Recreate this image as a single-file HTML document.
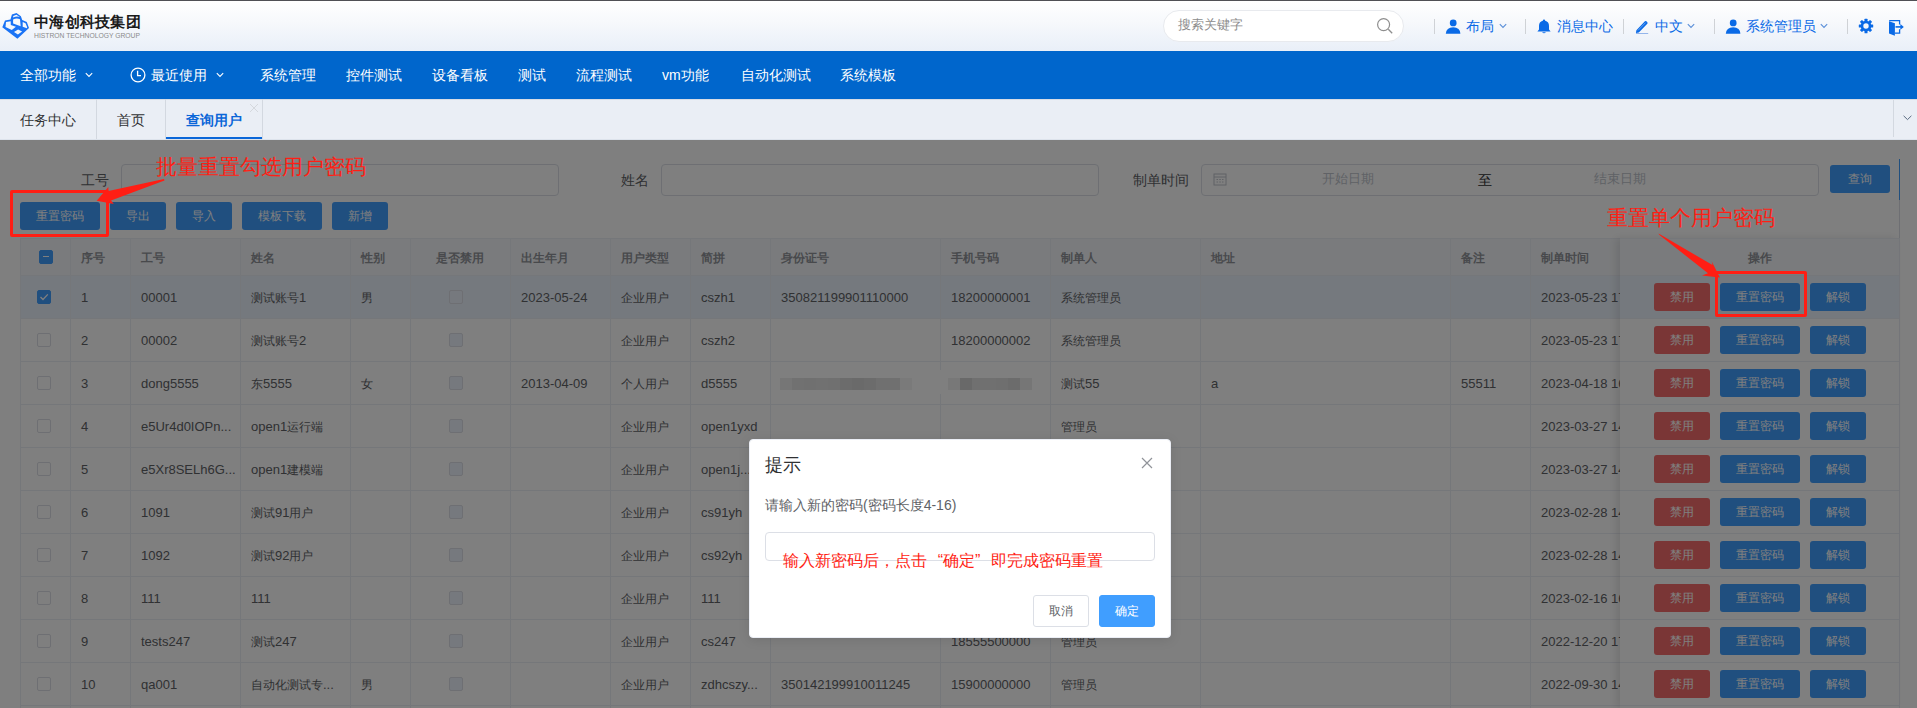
<!DOCTYPE html><html><head><meta charset="utf-8"><style>
*{box-sizing:border-box;}
html,body{margin:0;padding:0;}
body{width:1917px;height:708px;overflow:hidden;position:relative;font-family:"Liberation Sans",sans-serif;background:#fff;}
.a{position:absolute;white-space:nowrap;}
#hdr{left:0;top:0;width:1917px;height:51px;background:linear-gradient(#ffffff 0%,#f7f9fc 40%,#e9eff8 100%);border-top:1px solid #505055;}
#nav{left:0;top:51px;width:1917px;height:48px;background:#0066cc;color:#fff;font-size:14px;}
#nav .a{top:0;line-height:48px;}
#tabs{left:0;top:99px;width:1917px;height:41px;background:#eaeef5;font-size:14px;color:#303133;border-bottom:1px solid #dde3ec;}
.hi{color:#0a6ae6;font-size:14px;line-height:16px;}
.sep{width:1px;background:#cfd2d6;}
#content{left:0;top:140px;width:1917px;height:568px;background:#fff;}
.lbl{font-size:14px;color:#606266;line-height:16px;}
.inp{border:1px solid #dcdfe6;border-radius:4px;background:#fff;}
.btn{background:#409eff;color:#fff;font-size:12px;border-radius:3px;text-align:center;line-height:28px;height:28px;}
.btn.r{background:#f56c6c;}
.cj{font-size:12px;}
.th{font-size:12px;font-weight:bold;color:#909399;line-height:16px;}
.td{font-size:13px;color:#606266;line-height:16px;}
.vl{width:1px;background:#ebeef5;}
.hl{height:1px;background:#ebeef5;}
.cb{width:14px;height:14px;border:1px solid #dcdfe6;border-radius:2px;background:#fff;}
.cb.on{background:#409eff;border-color:#409eff;}
.cb.dis{background:#edf2fc;border-color:#dcdfe6;}
#ov{left:0;top:140px;width:1917px;height:568px;background:rgba(0,0,0,0.5);}
.red{color:#ff1e14;}
</style></head><body>
<div id="hdr" class="a">
<svg class="a" style="left:0;top:9px" width="32" height="32" viewBox="0 10 32 32">
<path fill="#1a73f5" fill-rule="evenodd" d="M2.3 27.2 L5.0 20.6 L10.5 19.4 L11.9 14.4 L16.5 13.1 L20.9 16.2 L22.2 20.1 L26.8 22.1 L29.0 27.9 L17.4 38.8 Z
M13.2 16.0 L16.4 14.8 L19.8 17.0 Q16.5 16.0 13.2 17.6 Z
M13.1 19.5 Q16.6 17.7 20.0 19.3 L20.5 24.5 L20.7 26.2 L13.1 23.5 Z
M6.0 22.0 L10.7 21.2 L10.8 24.9 L15.9 26.8 L11.8 29.9 L5.5 27.0 Z
M14.0 32.1 L18.1 29.5 L22.1 31.5 L17.9 34.6 Z
M22.7 21.9 L25.5 23.2 L27.2 27.3 L26.8 28.2 L22.7 26.8 Z"/>
</svg>
<div class="a" style="left:34px;top:12px;font-size:15px;font-weight:bold;color:#1b1b1b;line-height:18px;letter-spacing:0.3px">中海创科技集团</div>
<div class="a" style="left:34px;top:31px;font-size:7px;color:#8a8a8a;line-height:8px;transform-origin:0 0;transform:scaleX(0.965)">HISTRON TECHNOLOGY GROUP</div>
<div class="a" style="left:1163px;top:9px;width:241px;height:32px;border:1px solid #e8eaee;border-radius:16px;background:#fff"></div>
<div class="a" style="left:1178px;top:16px;font-size:13px;color:#8c8c8c;line-height:16px">搜索关键字</div>
<svg class="a" style="left:1376px;top:16px" width="18" height="18" viewBox="0 0 18 18"><circle cx="7.6" cy="7.6" r="6" fill="none" stroke="#8e8e8e" stroke-width="1.2"/><path d="M12.3 12.3 L16.2 16.2" stroke="#8e8e8e" stroke-width="1.3"/></svg>
<div class="a sep" style="left:1434px;top:18px;height:15px"></div>
<div class="a sep" style="left:1525px;top:18px;height:15px"></div>
<div class="a sep" style="left:1623px;top:18px;height:15px"></div>
<div class="a sep" style="left:1714px;top:18px;height:15px"></div>
<div class="a sep" style="left:1847px;top:18px;height:15px"></div>
<svg class="a" style="left:1445px;top:17px" width="16" height="17" viewBox="0 0 16 17"><circle cx="8.2" cy="4.9" r="3.4" fill="#0a6ae6"/><path d="M0.8 15.8 Q1.2 9.2 8.2 9.2 Q15.2 9.2 15.4 15.8 Z" fill="#0a6ae6"/></svg>
<div class="a hi" style="left:1466px;top:17px">布局</div>
<svg class="a" style="left:1499px;top:22px" width="8" height="6" viewBox="0 0 8 6"><path d="M0.8 1.2 L4 4.4 L7.2 1.2" fill="none" stroke="#5a8fd8" stroke-width="1.1"/></svg>
<svg class="a" style="left:1537px;top:18px" width="14" height="15" viewBox="0 0 14 15"><path d="M7 0.6 Q8.2 0.6 8.2 1.8 Q12 2.8 12 7 L12 10.6 L13.6 12.4 L0.4 12.4 L2 10.6 L2 7 Q2 2.8 5.8 1.8 Q5.8 0.6 7 0.6Z" fill="#0a6ae6"/><path d="M5 13.2 Q7 15.4 9 13.2Z" fill="#0a6ae6"/></svg>
<div class="a hi" style="left:1557px;top:17px">消息中心</div>
<svg class="a" style="left:1635px;top:18px" width="14" height="15" viewBox="0 0 14 15"><path d="M1.4 11.2 L9.9 2.3 Q10.6 1.6 11.4 2.3 L12.3 3.2 Q13 4 12.3 4.7 L3.8 13.4 L0.9 14 Z" fill="#0a6ae6"/><path d="M3 11.4 L10.6 3.6" stroke="#7fb0f0" stroke-width="0.8"/><path d="M1 14.6 L13.2 14.6" stroke="#7ea6e6" stroke-width="0.9"/></svg>
<div class="a hi" style="left:1655px;top:17px">中文</div>
<svg class="a" style="left:1687px;top:22px" width="8" height="6" viewBox="0 0 8 6"><path d="M0.8 1.2 L4 4.4 L7.2 1.2" fill="none" stroke="#5a8fd8" stroke-width="1.1"/></svg>
<svg class="a" style="left:1725px;top:17px" width="16" height="17" viewBox="0 0 16 17"><circle cx="8.2" cy="4.9" r="3.4" fill="#0a6ae6"/><path d="M0.8 15.8 Q1.2 9.2 8.2 9.2 Q15.2 9.2 15.4 15.8 Z" fill="#0a6ae6"/></svg>
<div class="a hi" style="left:1746px;top:17px">系统管理员</div>
<svg class="a" style="left:1820px;top:22px" width="8" height="6" viewBox="0 0 8 6"><path d="M0.8 1.2 L4 4.4 L7.2 1.2" fill="none" stroke="#5a8fd8" stroke-width="1.1"/></svg>
<svg class="a" style="left:1858px;top:17px" width="16" height="16" viewBox="0 0 16 16"><g fill="#0a6ae6">
<rect x="6.5" y="0.8" width="3" height="3.4" rx="0.5"/><rect x="6.5" y="11.8" width="3" height="3.4" rx="0.5"/><rect x="0.8" y="6.5" width="3.4" height="3" rx="0.5"/><rect x="11.8" y="6.5" width="3.4" height="3" rx="0.5"/>
<g transform="rotate(45 8 8)"><rect x="6.5" y="0.8" width="3" height="3.4" rx="0.5"/><rect x="6.5" y="11.8" width="3" height="3.4" rx="0.5"/><rect x="0.8" y="6.5" width="3.4" height="3" rx="0.5"/><rect x="11.8" y="6.5" width="3.4" height="3" rx="0.5"/></g></g>
<circle cx="8" cy="8" r="4" fill="none" stroke="#0a6ae6" stroke-width="2.6"/></svg>
<svg class="a" style="left:1888px;top:17px" width="17" height="19" viewBox="0 0 17 19"><path d="M1 3.2 L6.9 5.3 L6.9 17.8 L1 15.4 Z" fill="#0a6ae6"/><path d="M1.2 2.7 L11.6 2.7 L11.6 6.6 M11.6 11.2 L11.6 15.2 L6.9 15.2" fill="none" stroke="#0a6ae6" stroke-width="1.3"/><path d="M7.5 8.9 L14.6 8.9" stroke="#0a6ae6" stroke-width="1.6"/><path d="M12.4 6.1 L15.8 8.9 L12.4 11.7 Z" fill="#0a6ae6"/></svg>
</div>
<div id="nav" class="a">
<div class="a" style="left:20px">全部功能</div>
<svg class="a" style="left:85px;top:21px" width="8" height="6" viewBox="0 0 8 6"><path d="M0.8 1.2 L4 4.4 L7.2 1.2" fill="none" stroke="#fff" stroke-width="1.1"/></svg>
<svg class="a" style="left:130px;top:16px" width="16" height="16" viewBox="0 0 16 16"><circle cx="8" cy="8" r="6.9" fill="none" stroke="#fff" stroke-width="1.3"/><path d="M7.6 3.8 L7.6 8.6 L11 8.6" fill="none" stroke="#fff" stroke-width="1.3"/></svg>
<div class="a" style="left:151px">最近使用</div>
<svg class="a" style="left:216px;top:21px" width="8" height="6" viewBox="0 0 8 6"><path d="M0.8 1.2 L4 4.4 L7.2 1.2" fill="none" stroke="#fff" stroke-width="1.1"/></svg>
<div class="a" style="left:260px">系统管理</div>
<div class="a" style="left:346px">控件测试</div>
<div class="a" style="left:432px">设备看板</div>
<div class="a" style="left:518px">测试</div>
<div class="a" style="left:576px">流程测试</div>
<div class="a" style="left:662px">vm功能</div>
<div class="a" style="left:741px">自动化测试</div>
<div class="a" style="left:840px">系统模板</div>
</div>
<div id="tabs" class="a">
<div class="a" style="left:0;top:0;width:1917px;height:1px;background:#d6dce6"></div>
<div class="a" style="left:20px;top:13px;line-height:16px">任务中心</div>
<div class="a sep" style="left:96px;top:0;height:40px;background:#d3d8e0"></div>
<div class="a" style="left:117px;top:13px;line-height:16px">首页</div>
<div class="a sep" style="left:165px;top:0;height:40px;background:#d3d8e0"></div>
<div class="a" style="left:186px;top:13px;line-height:16px;color:#0a66d8;font-weight:bold">查询用户</div>
<div class="a" style="left:166px;top:38px;width:96px;height:2px;background:#0a66d8"></div>
<div class="a sep" style="left:262px;top:0;height:40px;background:#d3d8e0"></div>
<svg class="a" style="left:249px;top:4px" width="10" height="10" viewBox="0 0 10 10"><path d="M1 1 L9 9 M9 1 L1 9" stroke="#d2d5da" stroke-width="0.9"/></svg>
<div class="a sep" style="left:1893px;top:1px;height:37px;background:#d3d8e0"></div>
<svg class="a" style="left:1903px;top:16px" width="9" height="6" viewBox="0 0 9 6"><path d="M0.6 0.8 L4.5 4.6 L8.4 0.8" fill="none" stroke="#5a6a80" stroke-width="1"/></svg>
</div>
<div id="content" class="a"></div>
<div class="a lbl" style="left:81px;top:172px">工号</div>
<div class="a inp" style="left:121px;top:164px;width:438px;height:32px"></div>
<div class="a lbl" style="left:621px;top:172px">姓名</div>
<div class="a inp" style="left:661px;top:164px;width:438px;height:32px"></div>
<div class="a lbl" style="left:1133px;top:172px">制单时间</div>
<div class="a inp" style="left:1201px;top:164px;width:618px;height:32px"></div>
<svg class="a" style="left:1213px;top:172px" width="14" height="14" viewBox="0 0 14 14"><rect x="1" y="2" width="12" height="11" fill="none" stroke="#c0c4cc" stroke-width="1"/><path d="M1 5 L13 5 M3.5 7.5h1.5M6.3 7.5h1.5M9 7.5h1.5M3.5 10h1.5M6.3 10h1.5M9 10h1.5" stroke="#c0c4cc" stroke-width="1"/></svg>
<div class="a" style="left:1322px;top:171px;font-size:13px;color:#c0c4cc;line-height:16px">开始日期</div>
<div class="a" style="left:1478px;top:172px;font-size:14px;color:#303133;line-height:16px">至</div>
<div class="a" style="left:1594px;top:171px;font-size:13px;color:#c0c4cc;line-height:16px">结束日期</div>
<div class="a btn" style="left:1830px;top:165px;width:60px">查询</div>
<div class="a" style="left:1899px;top:159px;width:1px;height:41px;background:#409eff"></div><div class="a" style="left:1899px;top:200px;width:1px;height:508px;background:#dcdfe6"></div>
<div class="a btn" style="left:20px;top:202px;width:80px">重置密码</div>
<div class="a btn" style="left:110px;top:202px;width:56px">导出</div>
<div class="a btn" style="left:176px;top:202px;width:56px">导入</div>
<div class="a btn" style="left:242px;top:202px;width:80px">模板下载</div>
<div class="a btn" style="left:332px;top:202px;width:56px">新增</div>
<div class="a" style="left:20px;top:238px;width:1879px;height:38px;background:#f5f7fa"></div>
<div class="a" style="left:20px;top:276px;width:1879px;height:42px;background:#ebf3fc"></div>
<div class="a hl" style="left:20px;top:238px;width:1879px"></div>
<div class="a hl" style="left:20px;top:275px;width:1879px"></div>
<div class="a hl" style="left:20px;top:318px;width:1879px"></div>
<div class="a hl" style="left:20px;top:361px;width:1879px"></div>
<div class="a hl" style="left:20px;top:404px;width:1879px"></div>
<div class="a hl" style="left:20px;top:447px;width:1879px"></div>
<div class="a hl" style="left:20px;top:490px;width:1879px"></div>
<div class="a hl" style="left:20px;top:533px;width:1879px"></div>
<div class="a hl" style="left:20px;top:576px;width:1879px"></div>
<div class="a hl" style="left:20px;top:619px;width:1879px"></div>
<div class="a hl" style="left:20px;top:662px;width:1879px"></div>
<div class="a hl" style="left:20px;top:705px;width:1879px"></div>
<div class="a vl" style="left:20px;top:238px;height:470px"></div>
<div class="a vl" style="left:70px;top:238px;height:470px"></div>
<div class="a vl" style="left:130px;top:238px;height:470px"></div>
<div class="a vl" style="left:240px;top:238px;height:470px"></div>
<div class="a vl" style="left:350px;top:238px;height:470px"></div>
<div class="a vl" style="left:410px;top:238px;height:470px"></div>
<div class="a vl" style="left:510px;top:238px;height:470px"></div>
<div class="a vl" style="left:610px;top:238px;height:470px"></div>
<div class="a vl" style="left:690px;top:238px;height:470px"></div>
<div class="a vl" style="left:770px;top:238px;height:470px"></div>
<div class="a vl" style="left:940px;top:238px;height:470px"></div>
<div class="a vl" style="left:1050px;top:238px;height:470px"></div>
<div class="a vl" style="left:1200px;top:238px;height:470px"></div>
<div class="a vl" style="left:1450px;top:238px;height:470px"></div>
<div class="a vl" style="left:1530px;top:238px;height:470px"></div>
<div class="a vl" style="left:1620px;top:238px;height:470px"></div>
<div class="a vl" style="left:1899px;top:238px;height:470px"></div>
<div class="a th" style="left:81px;top:250px">序号</div>
<div class="a th" style="left:141px;top:250px">工号</div>
<div class="a th" style="left:251px;top:250px">姓名</div>
<div class="a th" style="left:361px;top:250px">性别</div>
<div class="a th" style="left:410px;width:100px;text-align:center;top:250px">是否禁用</div>
<div class="a th" style="left:521px;top:250px">出生年月</div>
<div class="a th" style="left:621px;top:250px">用户类型</div>
<div class="a th" style="left:701px;top:250px">简拼</div>
<div class="a th" style="left:781px;top:250px">身份证号</div>
<div class="a th" style="left:951px;top:250px">手机号码</div>
<div class="a th" style="left:1061px;top:250px">制单人</div>
<div class="a th" style="left:1211px;top:250px">地址</div>
<div class="a th" style="left:1461px;top:250px">备注</div>
<div class="a th" style="left:1541px;top:250px">制单时间</div>
<div class="a cb on" style="left:39px;top:250px"></div><div class="a" style="left:43px;top:256px;width:6px;height:1px;background:#fff"></div>
<div class="a cb on" style="left:37px;top:290px"></div>
<svg class="a" style="left:37px;top:290px" width="14" height="14" viewBox="0 0 14 14"><path d="M3.5 7 L6 9.5 L10.8 4.4" fill="none" stroke="#fff" stroke-width="1.3"/></svg>
<div class="a cb dis" style="left:449px;top:290px"></div>
<div class="a td" style="left:81px;top:290px">1</div>
<div class="a td" style="left:141px;top:290px">00001</div>
<div class="a td" style="left:251px;top:290px"><span class="cj">测试账号</span>1</div>
<div class="a td" style="left:361px;top:290px"><span class="cj">男</span></div>
<div class="a td" style="left:521px;top:290px">2023-05-24</div>
<div class="a td" style="left:621px;top:290px"><span class="cj">企业用户</span></div>
<div class="a td" style="left:701px;top:290px">cszh1</div>
<div class="a td" style="left:781px;top:290px">350821199901110000</div>
<div class="a td" style="left:951px;top:290px">18200000001</div>
<div class="a td" style="left:1061px;top:290px"><span class="cj">系统管理员</span></div>
<div class="a td" style="left:1541px;top:290px">2023-05-23 17:</div>
<div class="a cb" style="left:37px;top:333px"></div>
<div class="a cb dis" style="left:449px;top:333px"></div>
<div class="a td" style="left:81px;top:333px">2</div>
<div class="a td" style="left:141px;top:333px">00002</div>
<div class="a td" style="left:251px;top:333px"><span class="cj">测试账号</span>2</div>
<div class="a td" style="left:621px;top:333px"><span class="cj">企业用户</span></div>
<div class="a td" style="left:701px;top:333px">cszh2</div>
<div class="a td" style="left:951px;top:333px">18200000002</div>
<div class="a td" style="left:1061px;top:333px"><span class="cj">系统管理员</span></div>
<div class="a td" style="left:1541px;top:333px">2023-05-23 17:</div>
<div class="a cb" style="left:37px;top:376px"></div>
<div class="a cb dis" style="left:449px;top:376px"></div>
<div class="a td" style="left:81px;top:376px">3</div>
<div class="a td" style="left:141px;top:376px">dong5555</div>
<div class="a td" style="left:251px;top:376px"><span class="cj">东</span>5555</div>
<div class="a td" style="left:361px;top:376px"><span class="cj">女</span></div>
<div class="a td" style="left:521px;top:376px">2013-04-09</div>
<div class="a td" style="left:621px;top:376px"><span class="cj">个人用户</span></div>
<div class="a td" style="left:701px;top:376px">d5555</div>
<div class="a" style="left:780px;top:378px;width:12px;height:12px;background:rgb(236,236,236)"></div>
<div class="a" style="left:792px;top:378px;width:12px;height:12px;background:rgb(226,226,226)"></div>
<div class="a" style="left:804px;top:378px;width:12px;height:12px;background:rgb(224,224,224)"></div>
<div class="a" style="left:816px;top:378px;width:12px;height:12px;background:rgb(226,226,226)"></div>
<div class="a" style="left:828px;top:378px;width:12px;height:12px;background:rgb(224,224,224)"></div>
<div class="a" style="left:840px;top:378px;width:12px;height:12px;background:rgb(216,216,216)"></div>
<div class="a" style="left:852px;top:378px;width:12px;height:12px;background:rgb(212,212,212)"></div>
<div class="a" style="left:864px;top:378px;width:12px;height:12px;background:rgb(216,216,216)"></div>
<div class="a" style="left:876px;top:378px;width:12px;height:12px;background:rgb(224,224,224)"></div>
<div class="a" style="left:888px;top:378px;width:12px;height:12px;background:rgb(224,224,224)"></div>
<div class="a" style="left:900px;top:378px;width:12px;height:12px;background:rgb(244,244,244)"></div>
<div class="a" style="left:939px;top:370px;width:9px;height:24px;background:#fff"></div>
<div class="a" style="left:948px;top:378px;width:12px;height:12px;background:rgb(240,240,240)"></div>
<div class="a" style="left:960px;top:378px;width:12px;height:12px;background:rgb(210,210,210)"></div>
<div class="a" style="left:972px;top:378px;width:12px;height:12px;background:rgb(224,224,224)"></div>
<div class="a" style="left:984px;top:378px;width:12px;height:12px;background:rgb(224,224,224)"></div>
<div class="a" style="left:996px;top:378px;width:12px;height:12px;background:rgb(222,222,222)"></div>
<div class="a" style="left:1008px;top:378px;width:12px;height:12px;background:rgb(216,216,216)"></div>
<div class="a" style="left:1020px;top:378px;width:12px;height:12px;background:rgb(236,236,236)"></div>
<div class="a td" style="left:1061px;top:376px"><span class="cj">测试</span>55</div>
<div class="a td" style="left:1211px;top:376px">a</div>
<div class="a td" style="left:1461px;top:376px">55511</div>
<div class="a td" style="left:1541px;top:376px">2023-04-18 16:</div>
<div class="a cb" style="left:37px;top:419px"></div>
<div class="a cb dis" style="left:449px;top:419px"></div>
<div class="a td" style="left:81px;top:419px">4</div>
<div class="a td" style="left:141px;top:419px">e5Ur4d0IOPn...</div>
<div class="a td" style="left:251px;top:419px">open1<span class="cj">运行端</span></div>
<div class="a td" style="left:621px;top:419px"><span class="cj">企业用户</span></div>
<div class="a td" style="left:701px;top:419px">open1yxd</div>
<div class="a td" style="left:1061px;top:419px"><span class="cj">管理员</span></div>
<div class="a td" style="left:1541px;top:419px">2023-03-27 14:</div>
<div class="a cb" style="left:37px;top:462px"></div>
<div class="a cb dis" style="left:449px;top:462px"></div>
<div class="a td" style="left:81px;top:462px">5</div>
<div class="a td" style="left:141px;top:462px">e5Xr8SELh6G...</div>
<div class="a td" style="left:251px;top:462px">open1<span class="cj">建模端</span></div>
<div class="a td" style="left:621px;top:462px"><span class="cj">企业用户</span></div>
<div class="a td" style="left:701px;top:462px">open1j...</div>
<div class="a td" style="left:1061px;top:462px"><span class="cj">管理员</span></div>
<div class="a td" style="left:1541px;top:462px">2023-03-27 14:</div>
<div class="a cb" style="left:37px;top:505px"></div>
<div class="a cb dis" style="left:449px;top:505px"></div>
<div class="a td" style="left:81px;top:505px">6</div>
<div class="a td" style="left:141px;top:505px">1091</div>
<div class="a td" style="left:251px;top:505px"><span class="cj">测试</span>91<span class="cj">用户</span></div>
<div class="a td" style="left:621px;top:505px"><span class="cj">企业用户</span></div>
<div class="a td" style="left:701px;top:505px">cs91yh</div>
<div class="a td" style="left:1061px;top:505px"><span class="cj">管理员</span></div>
<div class="a td" style="left:1541px;top:505px">2023-02-28 14:</div>
<div class="a cb" style="left:37px;top:548px"></div>
<div class="a cb dis" style="left:449px;top:548px"></div>
<div class="a td" style="left:81px;top:548px">7</div>
<div class="a td" style="left:141px;top:548px">1092</div>
<div class="a td" style="left:251px;top:548px"><span class="cj">测试</span>92<span class="cj">用户</span></div>
<div class="a td" style="left:621px;top:548px"><span class="cj">企业用户</span></div>
<div class="a td" style="left:701px;top:548px">cs92yh</div>
<div class="a td" style="left:1061px;top:548px"><span class="cj">管理员</span></div>
<div class="a td" style="left:1541px;top:548px">2023-02-28 14:</div>
<div class="a cb" style="left:37px;top:591px"></div>
<div class="a cb dis" style="left:449px;top:591px"></div>
<div class="a td" style="left:81px;top:591px">8</div>
<div class="a td" style="left:141px;top:591px">111</div>
<div class="a td" style="left:251px;top:591px">111</div>
<div class="a td" style="left:621px;top:591px"><span class="cj">企业用户</span></div>
<div class="a td" style="left:701px;top:591px">111</div>
<div class="a td" style="left:1061px;top:591px"><span class="cj">管理员</span></div>
<div class="a td" style="left:1541px;top:591px">2023-02-16 16:</div>
<div class="a cb" style="left:37px;top:634px"></div>
<div class="a cb dis" style="left:449px;top:634px"></div>
<div class="a td" style="left:81px;top:634px">9</div>
<div class="a td" style="left:141px;top:634px">tests247</div>
<div class="a td" style="left:251px;top:634px"><span class="cj">测试</span>247</div>
<div class="a td" style="left:621px;top:634px"><span class="cj">企业用户</span></div>
<div class="a td" style="left:701px;top:634px">cs247</div>
<div class="a td" style="left:951px;top:634px">18555500000</div>
<div class="a td" style="left:1061px;top:634px"><span class="cj">管理员</span></div>
<div class="a td" style="left:1541px;top:634px">2022-12-20 17:</div>
<div class="a cb" style="left:37px;top:677px"></div>
<div class="a cb dis" style="left:449px;top:677px"></div>
<div class="a td" style="left:81px;top:677px">10</div>
<div class="a td" style="left:141px;top:677px">qa001</div>
<div class="a td" style="left:251px;top:677px"><span class="cj">自动化测试专</span>...</div>
<div class="a td" style="left:361px;top:677px"><span class="cj">男</span></div>
<div class="a td" style="left:621px;top:677px"><span class="cj">企业用户</span></div>
<div class="a td" style="left:701px;top:677px">zdhcszy...</div>
<div class="a td" style="left:781px;top:677px">350142199910011245</div>
<div class="a td" style="left:951px;top:677px">15900000000</div>
<div class="a td" style="left:1061px;top:677px"><span class="cj">管理员</span></div>
<div class="a td" style="left:1541px;top:677px">2022-09-30 14:</div>
<div class="a" style="left:1620px;top:238px;width:279px;height:470px;background:#fff;box-shadow:-4px 0 8px rgba(0,0,0,0.10);overflow:hidden">
<div class="a" style="left:0;top:0;width:279px;height:38px;background:#f5f7fa"></div>
<div class="a" style="left:0;top:38px;width:279px;height:42px;background:#ebf3fc"></div>
<div class="a hl" style="left:0;top:0;width:279px"></div>
<div class="a hl" style="left:0;top:37px;width:279px"></div>
<div class="a hl" style="left:0;top:80px;width:279px"></div>
<div class="a hl" style="left:0;top:123px;width:279px"></div>
<div class="a hl" style="left:0;top:166px;width:279px"></div>
<div class="a hl" style="left:0;top:209px;width:279px"></div>
<div class="a hl" style="left:0;top:252px;width:279px"></div>
<div class="a hl" style="left:0;top:295px;width:279px"></div>
<div class="a hl" style="left:0;top:338px;width:279px"></div>
<div class="a hl" style="left:0;top:381px;width:279px"></div>
<div class="a hl" style="left:0;top:424px;width:279px"></div>
<div class="a hl" style="left:0;top:467px;width:279px"></div>
<div class="a th" style="left:0;width:279px;text-align:center;top:12px">操作</div>
<div class="a btn r" style="left:34px;top:45px;width:56px">禁用</div>
<div class="a btn" style="left:100px;top:45px;width:80px">重置密码</div>
<div class="a btn" style="left:190px;top:45px;width:56px">解锁</div>
<div class="a btn r" style="left:34px;top:88px;width:56px">禁用</div>
<div class="a btn" style="left:100px;top:88px;width:80px">重置密码</div>
<div class="a btn" style="left:190px;top:88px;width:56px">解锁</div>
<div class="a btn r" style="left:34px;top:131px;width:56px">禁用</div>
<div class="a btn" style="left:100px;top:131px;width:80px">重置密码</div>
<div class="a btn" style="left:190px;top:131px;width:56px">解锁</div>
<div class="a btn r" style="left:34px;top:174px;width:56px">禁用</div>
<div class="a btn" style="left:100px;top:174px;width:80px">重置密码</div>
<div class="a btn" style="left:190px;top:174px;width:56px">解锁</div>
<div class="a btn r" style="left:34px;top:217px;width:56px">禁用</div>
<div class="a btn" style="left:100px;top:217px;width:80px">重置密码</div>
<div class="a btn" style="left:190px;top:217px;width:56px">解锁</div>
<div class="a btn r" style="left:34px;top:260px;width:56px">禁用</div>
<div class="a btn" style="left:100px;top:260px;width:80px">重置密码</div>
<div class="a btn" style="left:190px;top:260px;width:56px">解锁</div>
<div class="a btn r" style="left:34px;top:303px;width:56px">禁用</div>
<div class="a btn" style="left:100px;top:303px;width:80px">重置密码</div>
<div class="a btn" style="left:190px;top:303px;width:56px">解锁</div>
<div class="a btn r" style="left:34px;top:346px;width:56px">禁用</div>
<div class="a btn" style="left:100px;top:346px;width:80px">重置密码</div>
<div class="a btn" style="left:190px;top:346px;width:56px">解锁</div>
<div class="a btn r" style="left:34px;top:389px;width:56px">禁用</div>
<div class="a btn" style="left:100px;top:389px;width:80px">重置密码</div>
<div class="a btn" style="left:190px;top:389px;width:56px">解锁</div>
<div class="a btn r" style="left:34px;top:432px;width:56px">禁用</div>
<div class="a btn" style="left:100px;top:432px;width:80px">重置密码</div>
<div class="a btn" style="left:190px;top:432px;width:56px">解锁</div>
</div>
<div id="ov" class="a"></div>
<div class="a" style="left:749px;top:439px;width:422px;height:199px;background:#fff;border:1px solid #ebeef5;border-radius:4px;box-shadow:0 2px 12px rgba(0,0,0,0.1)"></div>
<div class="a" style="left:765px;top:455px;font-size:18px;line-height:20px;color:#303133">提示</div>
<svg class="a" style="left:1141px;top:457px" width="12" height="12" viewBox="0 0 12 12"><path d="M1 1 L11 11 M11 1 L1 11" stroke="#909399" stroke-width="1.2"/></svg>
<div class="a" style="left:765px;top:497px;font-size:14px;line-height:16px;color:#606266">请输入新的密码(密码长度4-16)</div>
<div class="a" style="left:765px;top:532px;width:390px;height:29px;border:1px solid #dcdfe6;border-radius:4px;background:#fff"></div>
<div class="a red" style="left:783px;top:551px;font-size:16px;line-height:20px">输入新密码后，点击<span style="display:inline-block;width:16px;text-align:right">“</span>确定<span style="display:inline-block;width:16px;text-align:left">”</span>即完成密码重置</div>
<div class="a" style="left:1033px;top:595px;width:56px;height:32px;border:1px solid #dcdfe6;border-radius:3px;background:#fff;font-size:12px;color:#606266;text-align:center;line-height:30px">取消</div>
<div class="a" style="left:1099px;top:595px;width:56px;height:32px;border:1px solid #409eff;border-radius:3px;background:#409eff;font-size:12px;color:#fff;text-align:center;line-height:30px">确定</div>
<div class="a red" style="left:156px;top:154px;font-size:21px;line-height:26px">批量重置勾选用户密码</div>
<div class="a" style="left:10px;top:190px;width:99px;height:47px;border:3px solid #ff1e14;border-radius:2px"></div>
<svg class="a" style="left:0;top:140px" width="200" height="80" viewBox="0 140 200 80"><path d="M164 179 L108.5 191 L108.3 187 L96.7 200.8 L113.8 204 L111 200.4 L164.5 180.6 Z" fill="#ff1e14"/></svg>
<div class="a red" style="left:1607px;top:205px;font-size:21px;line-height:26px">重置单个用户密码</div>
<div class="a" style="left:1715px;top:271px;width:92px;height:46px;border:3px solid #ff1e14;border-radius:2px"></div>
<svg class="a" style="left:1640px;top:225px" width="100" height="70" viewBox="1640 225 100 70"><path d="M1658.5 233.6 L1712.5 265 L1711.6 261.3 L1719.9 277.5 L1702 275.5 L1708 273.2 L1659.2 234.8 Z" fill="#ff1e14"/></svg>
</body></html>
